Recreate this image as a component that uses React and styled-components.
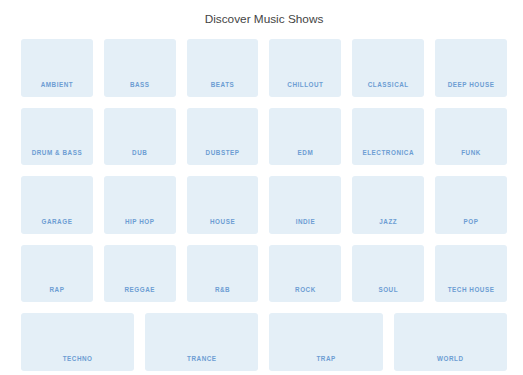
import React from 'react'
import styled, { createGlobalStyle } from 'styled-components'

const GlobalStyle = createGlobalStyle`
    html, body {
        margin: 0;
        padding: 0;
        background: #ffffff;
        font-family: "Liberation Sans", Arial, sans-serif;
    }
`

const Page = styled.div`
    width: 523px;
    padding: 11px 16px 0 21px;
    box-sizing: border-box;
`

const Title = styled.h1`
    margin: 0 0 11px 0;
    font-size: 11.8px;
    font-weight: normal;
    color: #444444;
    text-align: center;
    line-height: 17px;
`

const Grid = styled.div`
    display: grid;
    grid-template-columns: repeat(12, 1fr);
    column-gap: 11px;
    row-gap: 11px;
    width: 486px;
`

const Card = styled.a`
    grid-column: span ${props => props.span};
    height: 57.5px;
    background-color: #e4eff7;
    border-radius: 3px;
    display: flex;
    align-items: flex-end;
    justify-content: center;
    padding-bottom: 9px;
    box-sizing: border-box;
    text-decoration: none;
    cursor: pointer;

    &:hover {
        background-color: #d8e7f3;
    }
`

const Label = styled.span`
    font-size: 6.3px;
    font-weight: bold;
    letter-spacing: 0.55px;
    text-transform: uppercase;
    color: #6c9dd3;
`

const genres = [
    'Ambient', 'Bass', 'Beats', 'Chillout', 'Classical', 'Deep House',
    'Drum & Bass', 'Dub', 'Dubstep', 'EDM', 'Electronica', 'Funk',
    'Garage', 'Hip Hop', 'House', 'Indie', 'Jazz', 'Pop',
    'Rap', 'Reggae', 'R&B', 'Rock', 'Soul', 'Tech House',
    'Techno', 'Trance', 'Trap', 'World'
]

export default function App() {
    return (
        <Page>
            <GlobalStyle />
            <Title>Discover Music Shows</Title>
            <Grid>
                {genres.map((g, i) => (
                    <Card key={g} href="#" span={i >= 24 ? 3 : 2}>
                        <Label>{g}</Label>
                    </Card>
                ))}
            </Grid>
        </Page>
    )
}
